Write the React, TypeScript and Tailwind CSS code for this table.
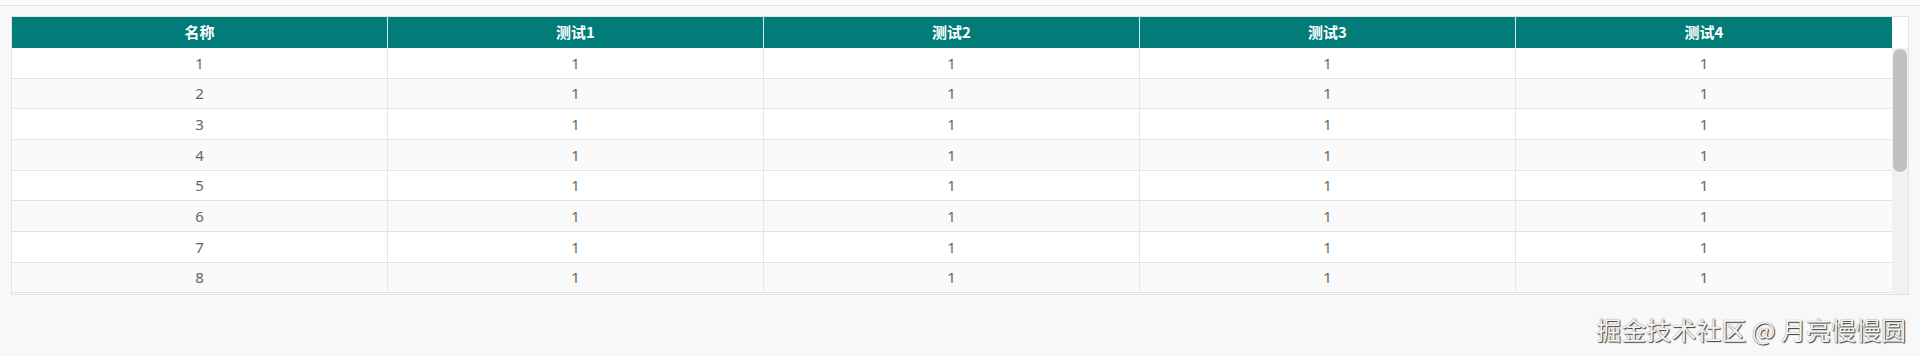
import React from 'react';

const columns = ['名称', '测试1', '测试2', '测试3', '测试4'];

const rows = Array.from({ length: 8 }, (_, i) => ({
  id: i + 1,
  name: String(i + 1),
  values: ['1', '1', '1', '1'],
}));

function TableHeader() {
  return (
    <div className="flex h-[31px] shrink-0">
      <div className="grid flex-1 grid-cols-5 bg-[#027c78]">
        {columns.map((col, i) => (
          <div
            key={col}
            className={`flex items-center justify-center text-[15px] font-bold text-white ${
              i < columns.length - 1 ? 'border-r border-[#d6ecea]' : ''
            }`}
          >
            {col}
          </div>
        ))}
      </div>
      <div className="w-[16px] bg-white" />
    </div>
  );
}

function TableBody() {
  return (
    <div className="flex h-[246px]">
      <div className="flex-1 overflow-hidden">
        {rows.map((row, r) => (
          <div
            key={row.id}
            className={`grid h-[30.67px] grid-cols-5 border-b border-[#e4e4e4] ${
              r % 2 === 1 ? 'bg-[#fafafa]' : 'bg-white'
            }`}
          >
            {[row.name, ...row.values].map((v, i) => (
              <div
                key={i}
                className={`flex items-center justify-center font-['Noto_Sans','Noto_Sans_CJK_SC',sans-serif] text-[15px] text-[#666] ${
                  i < 4 ? 'border-r border-[#e6e6e6]' : ''
                }`}
              >
                {v}
              </div>
            ))}
          </div>
        ))}
      </div>
      <div className="flex w-[16px] flex-col bg-[#f1f1f1] px-[1px] pt-[1px]">
        <div className="h-[123px] rounded-full bg-[#c1c1c1]" />
      </div>
    </div>
  );
}

export default function App() {
  return (
    <div className="flex h-[356px] flex-col bg-[#f8f8f8] font-['Microsoft_YaHei','Noto_Sans_CJK_SC',sans-serif]">
      <div className="h-[5px] bg-[#fdfdfd]" />
      <div className="h-px bg-[#e2e2e2]" />
      <div className="px-[11px] pt-[10px]">
        <div className="flex flex-col border border-[#e2e2e2] bg-white">
          <TableHeader />
          <TableBody />
        </div>
      </div>
      <div className="flex justify-end pr-[14px] pt-[19px]">
        <span className="text-[25px] leading-[30px] text-[#f4f4f4] [text-shadow:1px_1px_1px_#3c3c3c,0_0_1px_#777]">
          掘金技术社区 @ 月亮慢慢圆
        </span>
      </div>
    </div>
  );
}
